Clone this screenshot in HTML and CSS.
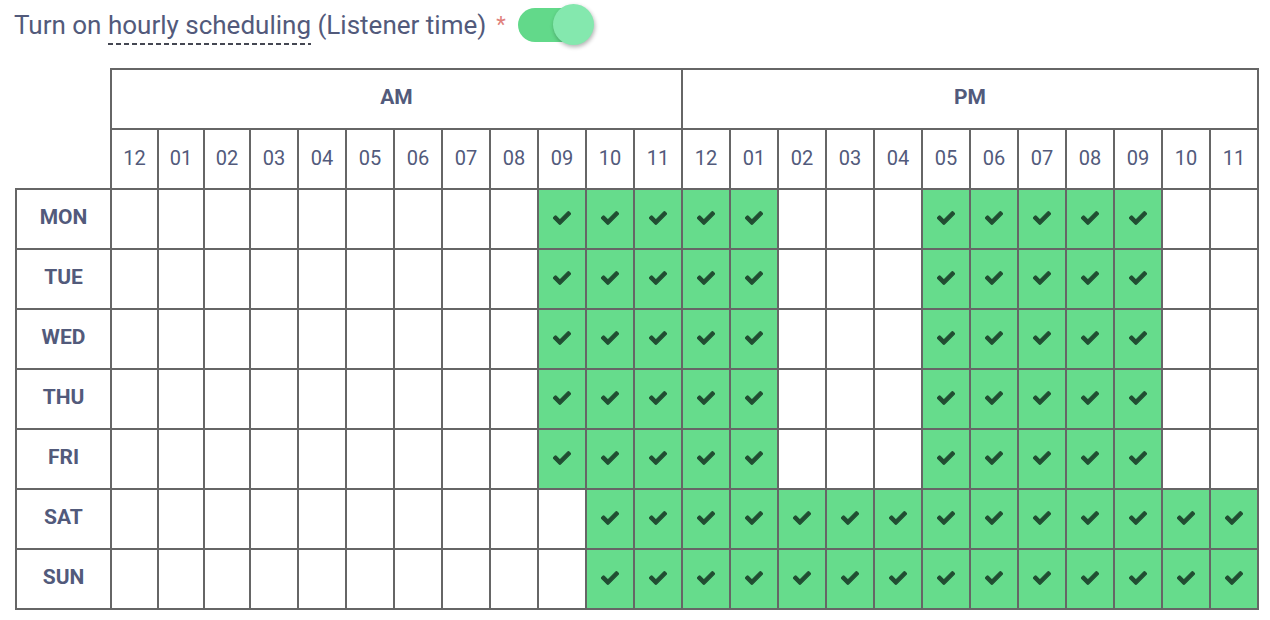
FILE: index.html
```html
<!DOCTYPE html>
<html>
<head>
<meta charset="utf-8">
<link rel="stylesheet" href="styles.css">
</head>
<body>
<svg class="defs" width="0" height="0" aria-hidden="true">
  <symbol id="ck" viewBox="-16 52 544 408">
    <path d="M173.898 439.404l-166.4-166.4c-9.997-9.997-9.997-26.206 0-36.204l36.203-36.204c9.997-9.998 26.207-9.998 36.204 0L192 312.69 432.095 72.596c9.997-9.997 26.207-9.997 36.204 0l36.203 36.204c9.997 9.997 9.997 26.206 0 36.204l-294.4 294.401c-9.998 9.997-26.207 9.997-36.204-.001z"/>
  </symbol>
</svg>
<div class="page">
  <div class="title">
    <span class="label">Turn on <span class="dash">hourly scheduling</span> (Listener time)</span>
    <span class="req">*</span>
    <span class="toggle"><span class="track"></span><span class="knob"></span></span>
  </div>

  <div class="grid">
    <div class="corner"></div>
    <div class="half">AM</div>
    <div class="half">PM</div>

    <div class="h">12</div><div class="h">01</div><div class="h">02</div><div class="h">03</div><div class="h">04</div><div class="h">05</div><div class="h">06</div><div class="h">07</div><div class="h">08</div><div class="h">09</div><div class="h">10</div><div class="h">11</div>
    <div class="h">12</div><div class="h">01</div><div class="h">02</div><div class="h">03</div><div class="h">04</div><div class="h">05</div><div class="h">06</div><div class="h">07</div><div class="h">08</div><div class="h">09</div><div class="h">10</div><div class="h">11</div>

    <div class="day">MON</div>
    <div class="c"></div><div class="c"></div><div class="c"></div><div class="c"></div><div class="c"></div><div class="c"></div><div class="c"></div><div class="c"></div><div class="c"></div>
    <div class="c on"><svg class="ck"><use href="#ck"/></svg></div><div class="c on"><svg class="ck"><use href="#ck"/></svg></div><div class="c on"><svg class="ck"><use href="#ck"/></svg></div><div class="c on"><svg class="ck"><use href="#ck"/></svg></div><div class="c on"><svg class="ck"><use href="#ck"/></svg></div>
    <div class="c"></div><div class="c"></div><div class="c"></div>
    <div class="c on"><svg class="ck"><use href="#ck"/></svg></div><div class="c on"><svg class="ck"><use href="#ck"/></svg></div><div class="c on"><svg class="ck"><use href="#ck"/></svg></div><div class="c on"><svg class="ck"><use href="#ck"/></svg></div><div class="c on"><svg class="ck"><use href="#ck"/></svg></div>
    <div class="c"></div><div class="c"></div>

    <div class="day">TUE</div>
    <div class="c"></div><div class="c"></div><div class="c"></div><div class="c"></div><div class="c"></div><div class="c"></div><div class="c"></div><div class="c"></div><div class="c"></div>
    <div class="c on"><svg class="ck"><use href="#ck"/></svg></div><div class="c on"><svg class="ck"><use href="#ck"/></svg></div><div class="c on"><svg class="ck"><use href="#ck"/></svg></div><div class="c on"><svg class="ck"><use href="#ck"/></svg></div><div class="c on"><svg class="ck"><use href="#ck"/></svg></div>
    <div class="c"></div><div class="c"></div><div class="c"></div>
    <div class="c on"><svg class="ck"><use href="#ck"/></svg></div><div class="c on"><svg class="ck"><use href="#ck"/></svg></div><div class="c on"><svg class="ck"><use href="#ck"/></svg></div><div class="c on"><svg class="ck"><use href="#ck"/></svg></div><div class="c on"><svg class="ck"><use href="#ck"/></svg></div>
    <div class="c"></div><div class="c"></div>

    <div class="day">WED</div>
    <div class="c"></div><div class="c"></div><div class="c"></div><div class="c"></div><div class="c"></div><div class="c"></div><div class="c"></div><div class="c"></div><div class="c"></div>
    <div class="c on"><svg class="ck"><use href="#ck"/></svg></div><div class="c on"><svg class="ck"><use href="#ck"/></svg></div><div class="c on"><svg class="ck"><use href="#ck"/></svg></div><div class="c on"><svg class="ck"><use href="#ck"/></svg></div><div class="c on"><svg class="ck"><use href="#ck"/></svg></div>
    <div class="c"></div><div class="c"></div><div class="c"></div>
    <div class="c on"><svg class="ck"><use href="#ck"/></svg></div><div class="c on"><svg class="ck"><use href="#ck"/></svg></div><div class="c on"><svg class="ck"><use href="#ck"/></svg></div><div class="c on"><svg class="ck"><use href="#ck"/></svg></div><div class="c on"><svg class="ck"><use href="#ck"/></svg></div>
    <div class="c"></div><div class="c"></div>

    <div class="day">THU</div>
    <div class="c"></div><div class="c"></div><div class="c"></div><div class="c"></div><div class="c"></div><div class="c"></div><div class="c"></div><div class="c"></div><div class="c"></div>
    <div class="c on"><svg class="ck"><use href="#ck"/></svg></div><div class="c on"><svg class="ck"><use href="#ck"/></svg></div><div class="c on"><svg class="ck"><use href="#ck"/></svg></div><div class="c on"><svg class="ck"><use href="#ck"/></svg></div><div class="c on"><svg class="ck"><use href="#ck"/></svg></div>
    <div class="c"></div><div class="c"></div><div class="c"></div>
    <div class="c on"><svg class="ck"><use href="#ck"/></svg></div><div class="c on"><svg class="ck"><use href="#ck"/></svg></div><div class="c on"><svg class="ck"><use href="#ck"/></svg></div><div class="c on"><svg class="ck"><use href="#ck"/></svg></div><div class="c on"><svg class="ck"><use href="#ck"/></svg></div>
    <div class="c"></div><div class="c"></div>

    <div class="day">FRI</div>
    <div class="c"></div><div class="c"></div><div class="c"></div><div class="c"></div><div class="c"></div><div class="c"></div><div class="c"></div><div class="c"></div><div class="c"></div>
    <div class="c on"><svg class="ck"><use href="#ck"/></svg></div><div class="c on"><svg class="ck"><use href="#ck"/></svg></div><div class="c on"><svg class="ck"><use href="#ck"/></svg></div><div class="c on"><svg class="ck"><use href="#ck"/></svg></div><div class="c on"><svg class="ck"><use href="#ck"/></svg></div>
    <div class="c"></div><div class="c"></div><div class="c"></div>
    <div class="c on"><svg class="ck"><use href="#ck"/></svg></div><div class="c on"><svg class="ck"><use href="#ck"/></svg></div><div class="c on"><svg class="ck"><use href="#ck"/></svg></div><div class="c on"><svg class="ck"><use href="#ck"/></svg></div><div class="c on"><svg class="ck"><use href="#ck"/></svg></div>
    <div class="c"></div><div class="c"></div>

    <div class="day">SAT</div>
    <div class="c"></div><div class="c"></div><div class="c"></div><div class="c"></div><div class="c"></div><div class="c"></div><div class="c"></div><div class="c"></div><div class="c"></div><div class="c"></div>
    <div class="c on"><svg class="ck"><use href="#ck"/></svg></div><div class="c on"><svg class="ck"><use href="#ck"/></svg></div><div class="c on"><svg class="ck"><use href="#ck"/></svg></div><div class="c on"><svg class="ck"><use href="#ck"/></svg></div><div class="c on"><svg class="ck"><use href="#ck"/></svg></div><div class="c on"><svg class="ck"><use href="#ck"/></svg></div><div class="c on"><svg class="ck"><use href="#ck"/></svg></div>
    <div class="c on"><svg class="ck"><use href="#ck"/></svg></div><div class="c on"><svg class="ck"><use href="#ck"/></svg></div><div class="c on"><svg class="ck"><use href="#ck"/></svg></div><div class="c on"><svg class="ck"><use href="#ck"/></svg></div><div class="c on"><svg class="ck"><use href="#ck"/></svg></div><div class="c on"><svg class="ck"><use href="#ck"/></svg></div><div class="c on"><svg class="ck"><use href="#ck"/></svg></div>

    <div class="day">SUN</div>
    <div class="c"></div><div class="c"></div><div class="c"></div><div class="c"></div><div class="c"></div><div class="c"></div><div class="c"></div><div class="c"></div><div class="c"></div><div class="c"></div>
    <div class="c on"><svg class="ck"><use href="#ck"/></svg></div><div class="c on"><svg class="ck"><use href="#ck"/></svg></div><div class="c on"><svg class="ck"><use href="#ck"/></svg></div><div class="c on"><svg class="ck"><use href="#ck"/></svg></div><div class="c on"><svg class="ck"><use href="#ck"/></svg></div><div class="c on"><svg class="ck"><use href="#ck"/></svg></div><div class="c on"><svg class="ck"><use href="#ck"/></svg></div>
    <div class="c on"><svg class="ck"><use href="#ck"/></svg></div><div class="c on"><svg class="ck"><use href="#ck"/></svg></div><div class="c on"><svg class="ck"><use href="#ck"/></svg></div><div class="c on"><svg class="ck"><use href="#ck"/></svg></div><div class="c on"><svg class="ck"><use href="#ck"/></svg></div><div class="c on"><svg class="ck"><use href="#ck"/></svg></div><div class="c on"><svg class="ck"><use href="#ck"/></svg></div>
  </div>
</div>
</body>
</html>
```

FILE: styles.css
```css
html, body {
  margin: 0;
  padding: 0;
  background: #ffffff;
}
body {
  font-family: Roboto, "Liberation Sans", sans-serif;
  color: #525a7b;
}
.defs {
  position: absolute;
  width: 0;
  height: 0;
  overflow: hidden;
}
.page {
  padding-left: 14px;
}
.title {
  height: 49px;
  display: flex;
  align-items: center;
  font-size: 26px;
}
.label {
  color: #525a7b;
}
.dash {
  padding-bottom: 5px;
  background-image: repeating-linear-gradient(90deg, #444752 0 5px, transparent 5px 8px);
  background-size: 100% 2px;
  background-position: left bottom;
  background-repeat: no-repeat;
}
.req {
  color: #e0817c;
  margin-left: 10px;
  font-size: 22px;
  align-self: flex-start;
  margin-top: 12px;
}
.toggle {
  position: relative;
  width: 76px;
  height: 41px;
  margin-left: 12px;
}
.track {
  position: absolute;
  left: 0;
  top: 4px;
  width: 62px;
  height: 34px;
  border-radius: 17px;
  background: #62d98a;
}
.knob {
  position: absolute;
  left: 35px;
  top: 0;
  width: 41px;
  height: 41px;
  border-radius: 50%;
  background: #84e8ae;
  box-shadow: 1px 2px 4px rgba(0, 0, 0, 0.3);
}
.grid {
  margin-top: 19px;
  margin-left: 1px;
  display: grid;
  grid-template-columns: 97px 47px 46px 46px repeat(21, 48px);
  grid-template-rows: 62px 60px repeat(7, 60px);
}
.grid > div {
  box-sizing: border-box;
  border-right: 2px solid #666666;
  border-bottom: 2px solid #666666;
  display: flex;
  align-items: center;
  justify-content: center;
}
.corner {
  grid-row: 1 / span 2;
}
.half {
  grid-column: span 12;
  border-top: 2px solid #666666;
  font-size: 21px;
  font-weight: 700;
  color: #525a7b;
  padding-bottom: 4px;
}
.h {
  font-size: 20px;
  color: #525a7b;
  padding-bottom: 2px;
}
.day {
  border-left: 2px solid #666666;
  font-size: 21px;
  font-weight: 700;
  color: #525a7b;
  padding-bottom: 4px;
}
.c.on {
  background: #66dc8c;
}
.ck {
  width: 18px;
  height: 14px;
  fill: #214d32;
  stroke: #214d32;
  stroke-width: 34;
  stroke-linejoin: round;
  margin-bottom: 2px;
}
```
